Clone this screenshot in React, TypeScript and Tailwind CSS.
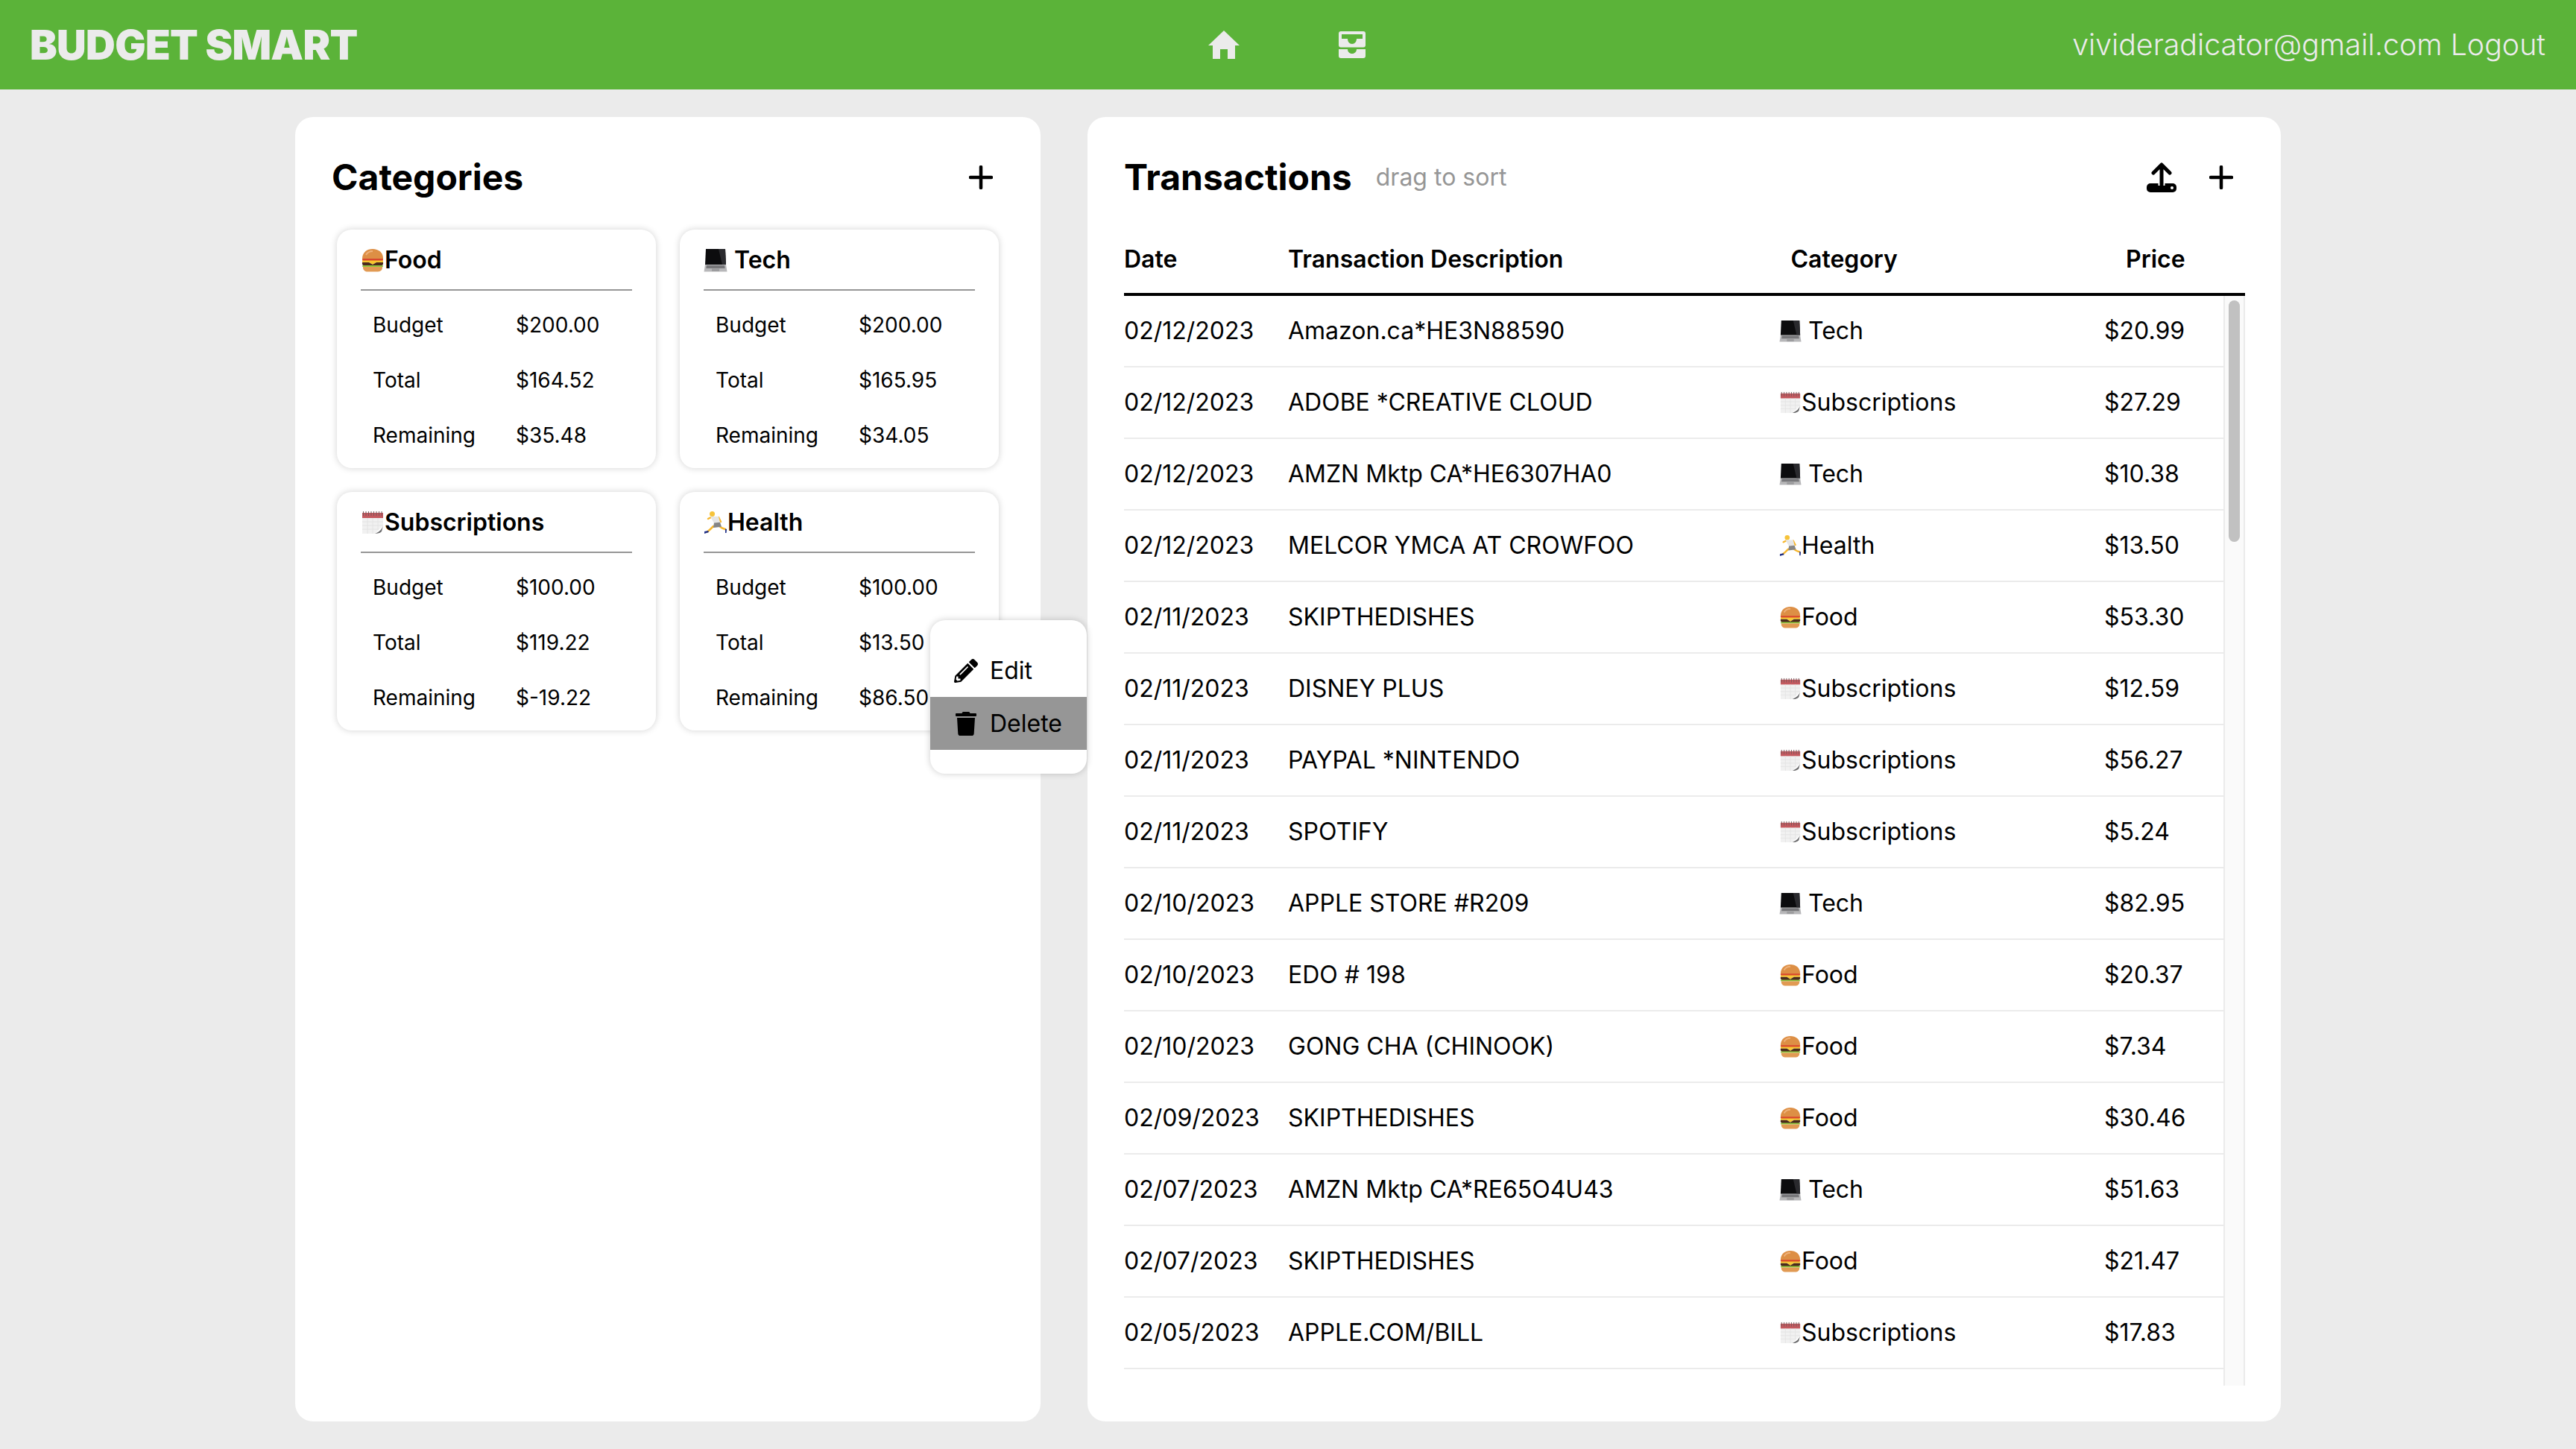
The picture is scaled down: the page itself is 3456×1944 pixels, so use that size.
import { FaPencilAlt, FaTrash } from "react-icons/fa";

type Kind = "Food" | "Tech" | "Subscriptions" | "Health";

const categories: { name: Kind; budget: string; total: string; remaining: string }[] = [
  { name: "Food", budget: "$200.00", total: "$164.52", remaining: "$35.48" },
  { name: "Tech", budget: "$200.00", total: "$165.95", remaining: "$34.05" },
  { name: "Subscriptions", budget: "$100.00", total: "$119.22", remaining: "$-19.22" },
  { name: "Health", budget: "$100.00", total: "$13.50", remaining: "$86.50" },
];

const transactions: { date: string; desc: string; cat: Kind; price: string }[] = [
  { date: "02/12/2023", desc: "Amazon.ca*HE3N88590", cat: "Tech", price: "$20.99" },
  { date: "02/12/2023", desc: "ADOBE *CREATIVE CLOUD", cat: "Subscriptions", price: "$27.29" },
  { date: "02/12/2023", desc: "AMZN Mktp CA*HE6307HA0", cat: "Tech", price: "$10.38" },
  { date: "02/12/2023", desc: "MELCOR YMCA AT CROWFOO", cat: "Health", price: "$13.50" },
  { date: "02/11/2023", desc: "SKIPTHEDISHES", cat: "Food", price: "$53.30" },
  { date: "02/11/2023", desc: "DISNEY PLUS", cat: "Subscriptions", price: "$12.59" },
  { date: "02/11/2023", desc: "PAYPAL *NINTENDO", cat: "Subscriptions", price: "$56.27" },
  { date: "02/11/2023", desc: "SPOTIFY", cat: "Subscriptions", price: "$5.24" },
  { date: "02/10/2023", desc: "APPLE STORE #R209", cat: "Tech", price: "$82.95" },
  { date: "02/10/2023", desc: "EDO # 198", cat: "Food", price: "$20.37" },
  { date: "02/10/2023", desc: "GONG CHA (CHINOOK)", cat: "Food", price: "$7.34" },
  { date: "02/09/2023", desc: "SKIPTHEDISHES", cat: "Food", price: "$30.46" },
  { date: "02/07/2023", desc: "AMZN Mktp CA*RE65O4U43", cat: "Tech", price: "$51.63" },
  { date: "02/07/2023", desc: "SKIPTHEDISHES", cat: "Food", price: "$21.47" },
  { date: "02/05/2023", desc: "APPLE.COM/BILL", cat: "Subscriptions", price: "$17.83" },
];

function Emoji({ kind, size }: { kind: Kind; size: number }) {
  if (kind === "Food") {
    return (
      <svg width={size} height={size} viewBox="0 0 32 32" className="shrink-0">
        <path d="M2 14C2 5.500 8.500 1 16 1s14 4.500 14 13v1H2z" fill="#dd8f45" />
        <path d="M7 9c2-3.500 5-5 9-5" stroke="#eeb27c" strokeWidth="2" fill="none" />
        <rect x="2" y="14" width="28" height="3" rx="1.500" fill="#d9472f" />
        <rect x="2" y="16.500" width="28" height="2.500" fill="#f6c52e" />
        <path d="M11 19h10l-5 3z" fill="#f6c52e" />
        <path d="M2.500 19H11l5 3 5-3h8.500c1 0 1 4-2 4.500h-23C1.500 23 1.500 19 2.500 19z" fill="#4b2a1c" />
        <rect x="2" y="23" width="28" height="2" rx="1" fill="#8fc43d" />
        <path d="M3 25h26v1c0 3.500-3 5.500-6 5.500H9c-3 0-6-2-6-5.500z" fill="#e19a53" />
      </svg>
    );
  }
  if (kind === "Tech") {
    return (
      <svg width={size} height={size} viewBox="0 0 32 32" className="shrink-0">
        <path d="M3 1h26l1 21H2z" fill="#0c0c0e" />
        <path d="M20 1h9l1 21h-5z" fill="#2a2a2e" />
        <path d="M2 22h28l1.500 9.500H.5z" fill="#b7b7b9" />
        <path d="M4 23h24l.7 4H3.300z" fill="#77777a" />
        <rect x="11" y="27.500" width="10" height="3.500" fill="#9c9c9e" />
      </svg>
    );
  }
  if (kind === "Subscriptions") {
    return (
      <svg width={size} height={size} viewBox="0 0 32 32" className="shrink-0">
        <rect x="2" y="3" width="28" height="28" fill="#f1f1f1" />
        <rect x="2" y="3" width="28" height="7" fill="#c4595f" />
        <path d="M3.500 1v6M7 1v6M10.500 1v6M14 1v6M17.500 1v6M21 1v6M24.500 1v6M28 1v6" stroke="#77585a" strokeWidth="1" />
        <path d="M2 15h28M2 20h28M2 25h22M9 10v21M16 10v21M23 10v16" stroke="#e2e2e2" strokeWidth="0.800" />
        <path d="M30 20L19 31h11z" fill="#fff" />
        <path d="M30 20c-2 6-5 8-11 11 5 0 7-1 9-3z" fill="#6a6a6c" />
      </svg>
    );
  }
  return (
    <svg width={size} height={size} viewBox="0 0 32 32" className="shrink-0">
      <path d="M13 21L9 25l-4 3.500" stroke="#f6b62c" strokeWidth="2.500" fill="none" strokeLinecap="round" />
      <path d="M21 21l4 2.500 4 1.500" stroke="#f6b62c" strokeWidth="2.500" fill="none" strokeLinecap="round" />
      <path d="M10 9l-4 2" stroke="#f6b62c" strokeWidth="2.500" fill="none" strokeLinecap="round" />
      <path d="M20 9l3 6" stroke="#f6b62c" strokeWidth="2.500" fill="none" strokeLinecap="round" />
      <circle cx="11.500" cy="4.500" r="3.500" fill="#f6c33a" />
      <path d="M9 8h11l2 8-8 1z" fill="#e6e6e6" />
      <path d="M14 16.500l8-.8 2 6-11 1.300z" fill="#858585" />
      <path d="M1 28l5-1 1 2-6 2z" fill="#1f2f86" />
      <path d="M29 24.500l2 .5-.5 5H29z" fill="#1f2f86" />
    </svg>
  );
}

function Plus() {
  return (
    <svg width="32" height="32" viewBox="0 0 32 32" fill="none" stroke="#000" strokeWidth="4.500" strokeLinecap="round">
      <path d="M16 2v28M2 16h28" />
    </svg>
  );
}

function CategoryLabel({ kind, size }: { kind: Kind; size: number }) {
  return (
    <span className="flex items-center">
      <Emoji kind={kind} size={size} />
      <span className={kind === "Tech" ? "ml-[9px]" : ""}>{kind}</span>
    </span>
  );
}

function CategoryCard({ cat }: { cat: (typeof categories)[number] }) {
  const rows = [
    ["Budget", cat.budget],
    ["Total", cat.total],
    ["Remaining", cat.remaining],
  ];
  return (
    <div className="h-[320px] rounded-[20px] bg-white px-8 pb-2 shadow-[0_0_10px_rgba(0,0,0,0.18)]">
      <div className="flex h-[82px] items-center border-b-2 border-[#969696] pt-px text-[32px] font-semibold">
        <CategoryLabel kind={cat.name} size={32} />
      </div>
      <div className="pt-[9px]">
        {rows.map(([label, value]) => (
          <div key={label} className="grid h-[74px] grid-cols-[192px_1fr] items-center pl-4 text-[28px]">
            <span>{label}</span>
            <span>{value}</span>
          </div>
        ))}
      </div>
    </div>
  );
}

export default function App() {
  return (
    <div className="h-[1944px] overflow-hidden bg-[#ebebeb] font-['Inter',sans-serif] text-black">
      {/* Top bar */}
      <header className="flex h-[120px] items-center bg-[#5bb339] pl-10 pr-[41px] text-[#ebebeb]">
        <div className="w-[1581px] text-[55px] font-black leading-none tracking-[-0.012em]">BUDGET SMART</div>
        <svg width="42" height="38" viewBox="0 0 42 38" fill="#ebebeb">
          <path d="M21 0L42 20H36V38H26V25H16V38H6V20H0Z" />
        </svg>
        <svg width="36" height="36" viewBox="0 0 36 36" fill="#ebebeb" className="ml-[133px]">
          <path
            fillRule="evenodd"
            d="M3 0h30a3 3 0 013 3v15.500a3 3 0 01-3 3H3a3 3 0 01-3-3V3a3 3 0 013-3zM4 4v6h8c0 4 2.500 7 6 7s6-3 6-7h8V4z"
          />
          <path d="M0 24h12c0 3.500 2.500 6 6 6s6-2.500 6-6h12v9a3 3 0 01-3 3H3a3 3 0 01-3-3z" />
        </svg>
        <div className="ml-auto text-[39.300px] font-light leading-none">vivideradicator@gmail.com Logout</div>
      </header>

      <main className="flex justify-center gap-[63px] pt-[37px]">
        {/* Categories */}
        <section className="relative h-[1750px] w-[1000px] rounded-[24px] bg-white pt-[41px]">
          <div className="flex h-[80px] items-center justify-between pl-[49px] pr-[64px]">
            <h2 className="text-[48px] font-bold">Categories</h2>
            <Plus />
          </div>
          <div className="mt-[30px] grid grid-cols-[428px_428px] gap-8 pl-[56px]">
            {categories.map((cat) => (
              <CategoryCard key={cat.name} cat={cat} />
            ))}
          </div>

          {/* Context menu */}
          <div className="absolute left-[852px] top-[675px] z-10 w-[210px] overflow-hidden rounded-[20px] bg-white py-8 text-[32px] shadow-[0_0_10px_rgba(0,0,0,0.2)]">
            <div className="flex h-[71px] items-center pl-8">
              <FaPencilAlt className="h-8 w-8" />
              <span className="ml-4">Edit</span>
            </div>
            <div className="flex h-[71px] items-center bg-[#969696] pl-8">
              <FaTrash className="h-8 w-8" />
              <span className="ml-4">Delete</span>
            </div>
          </div>
        </section>

        {/* Transactions */}
        <section className="h-[1750px] w-[1601px] rounded-[24px] bg-white pl-[49px] pr-[48px] pt-[41px]">
          <div className="flex h-[80px] items-center">
            <h2 className="text-[48px] font-bold">Transactions</h2>
            <span className="ml-8 text-[32px] text-[#969696]">drag to sort</span>
            <svg width="40" height="40" viewBox="0 0 40 40" className="ml-auto">
              <rect x="0" y="28" width="40" height="12" rx="5" fill="#000" />
              <circle cx="34" cy="34" r="2" fill="#fff" />
              <path d="M20 6v25" stroke="#fff" strokeWidth="9" />
              <path d="M20 4v26M9 14L20 3l11 11" stroke="#000" strokeWidth="5" strokeLinecap="round" strokeLinejoin="round" fill="none" />
            </svg>
            <span className="ml-11 mr-4">
              <Plus />
            </span>
          </div>

          <div className="mt-[25px] grid h-[94px] grid-cols-[220px_674.500px_449.500px_auto] items-center border-b-4 border-black text-[32px] font-semibold">
            <span>Date</span>
            <span>Transaction Description</span>
            <span>Category</span>
            <span>Price</span>
          </div>

          <div className="flex h-[1462px]">
            <div className="flex-1 overflow-hidden">
              {transactions.map((t, i) => (
                <div key={i} className="grid h-[96px] grid-cols-[220px_659px_436px_1fr] items-center border-b-2 border-[#ebebeb] text-[32px]">
                  <span>{t.date}</span>
                  <span>{t.desc}</span>
                  <CategoryLabel kind={t.cat} size={30} />
                  <span>{t.price}</span>
                </div>
              ))}
            </div>
            <div className="w-[29px] border-x-2 border-[#ebebeb] bg-[#fafafa] px-[5px] pt-[6px]">
              <div className="h-[324px] rounded-lg bg-[#c1c1c1]" />
            </div>
          </div>
        </section>
      </main>
    </div>
  );
}
